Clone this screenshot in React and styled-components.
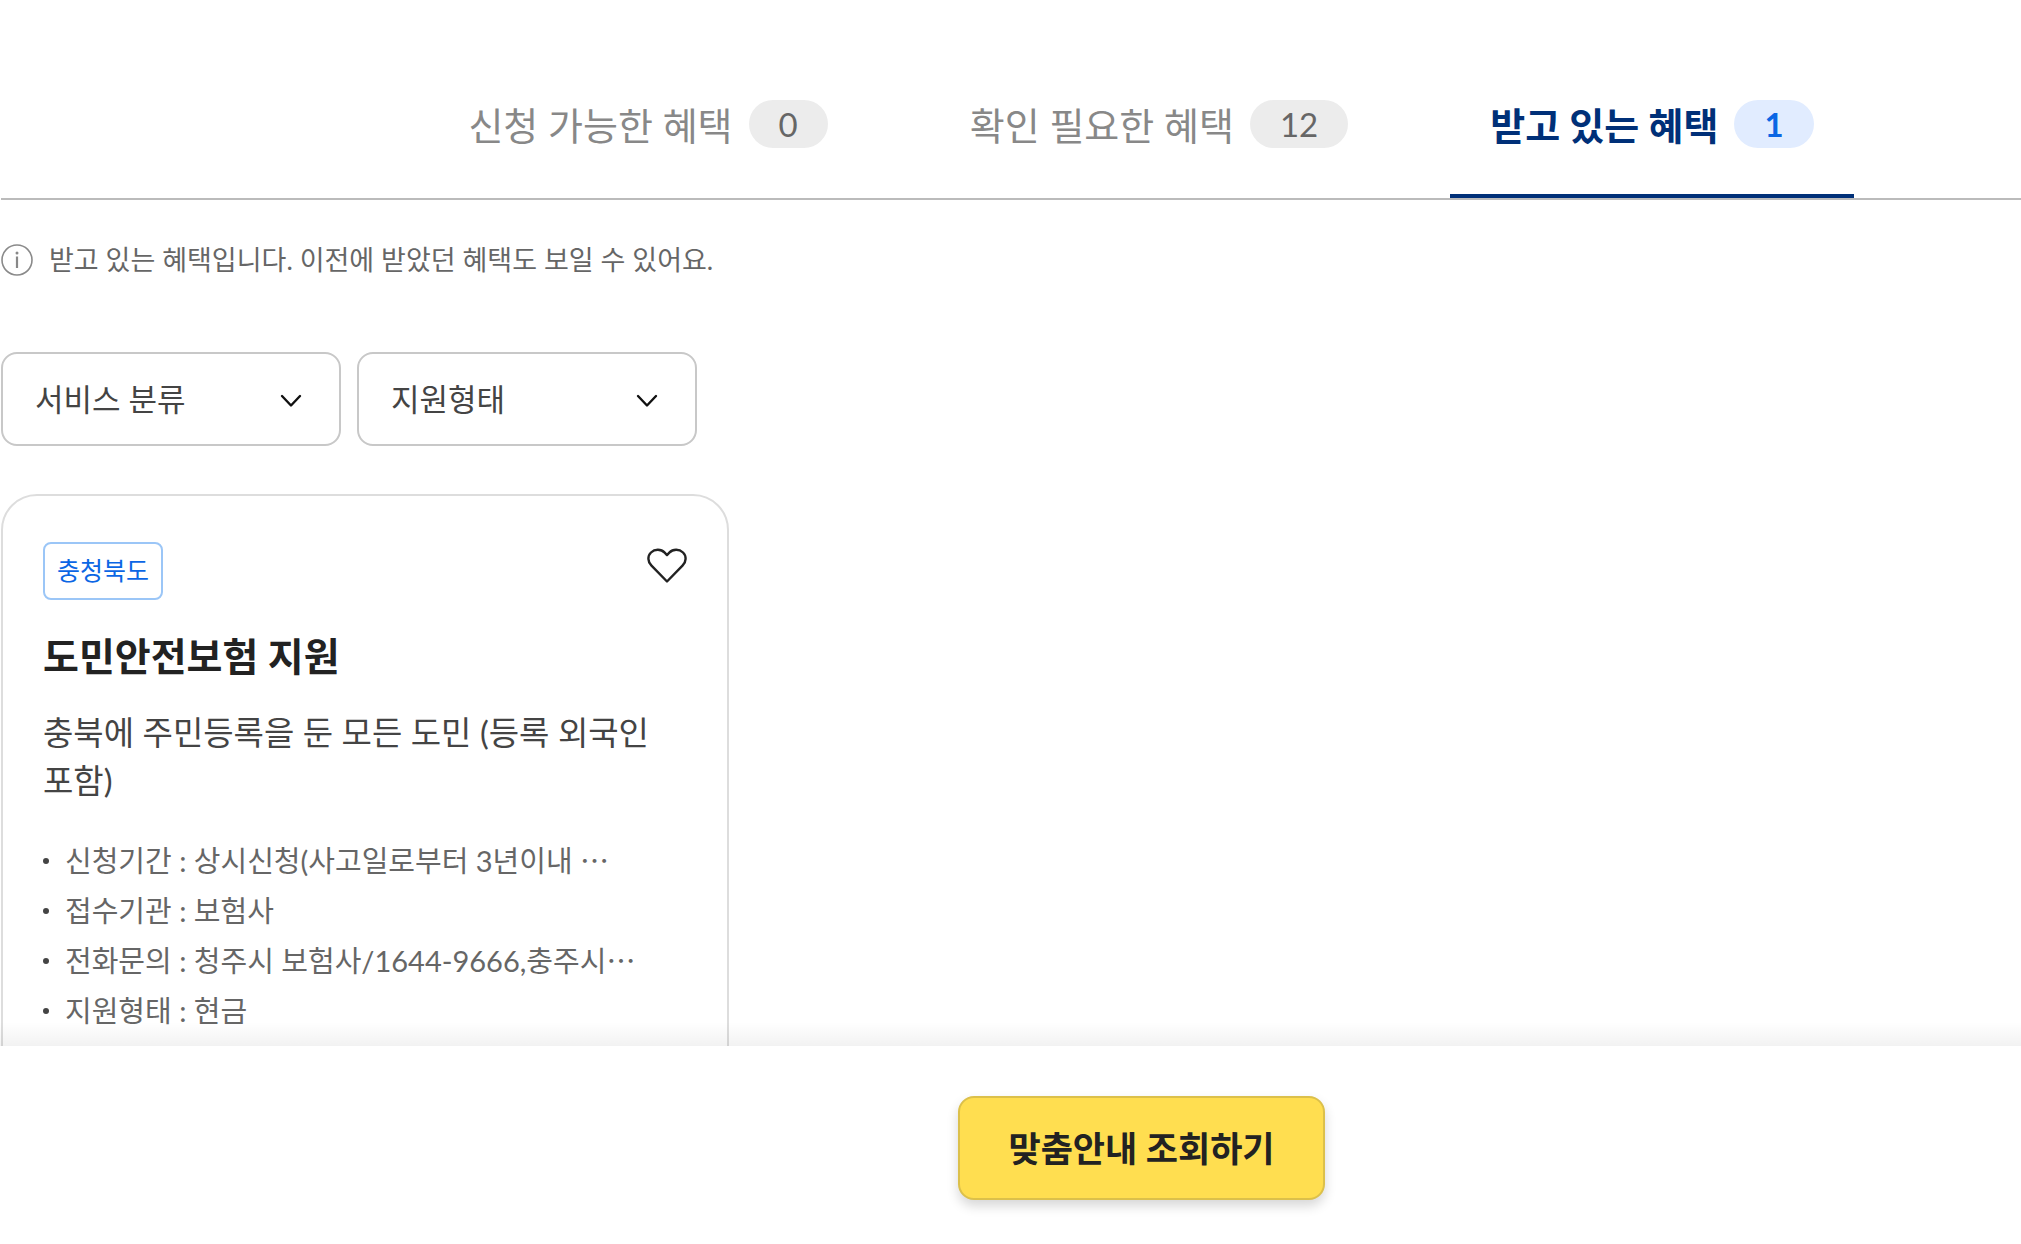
import { useState } from "react";
import styled, { createGlobalStyle } from "styled-components";

const GlobalStyle = createGlobalStyle`
  * {
    box-sizing: border-box;
  }

  body {
    margin: 0;
    background-color: #fff;
  }

  body,
  button,
  select {
    font-family: Lato, "Noto Sans CJK KR", sans-serif;
  }
`;

const tabs = [
  { id: "available", label: "신청 가능한 혜택", count: 0 },
  { id: "check", label: "확인 필요한 혜택", count: 12 },
  { id: "receiving", label: "받고 있는 혜택", count: 1 },
];

const filters = [
  { id: "category", label: "서비스 분류" },
  { id: "type", label: "지원형태" },
];

const benefit = {
  region: "충청북도",
  title: "도민안전보험 지원",
  description: "충북에 주민등록을 둔 모든 도민 (등록 외국인 포함)",
  details: [
    "신청기간 : 상시신청(사고일로부터 3년이내 ⋯",
    "접수기관 : 보험사",
    "전화문의 : 청주시 보험사/1644-9666,충주시⋯",
    "지원형태 : 현금",
  ],
};

/*
 * @param benefit - benefit object {region, title, description, details}
 */
const BenefitCard = ({ benefit }) => {
  const [liked, setLiked] = useState(false);

  return (
    <Card>
      <CardTop>
        <Region>{benefit.region}</Region>
        <LikeButton
          type="button"
          aria-label="관심 혜택"
          aria-pressed={liked}
          onClick={() => setLiked(!liked)}
        >
          <svg width="40" height="36" viewBox="0 0 40 36">
            <path
              d="M20 33.5 4.500 17.700C.5 13.600.4 7.900 4 4.500c3.900-3.700 10-3.600 13.700.2L20 7.100l2.300-2.400C26 .9 32.100.8 36 4.500c3.600 3.400 3.500 9.100-.5 13.200Z"
              fill={liked ? "#222" : "none"}
              stroke="#222"
              strokeWidth="2.4"
              strokeLinejoin="round"
            />
          </svg>
        </LikeButton>
      </CardTop>

      <Title>{benefit.title}</Title>
      <Description>{benefit.description}</Description>

      <Details>
        {benefit.details.map((detail) => (
          <Detail key={detail}>{detail}</Detail>
        ))}
      </Details>
    </Card>
  );
};

const App = () => {
  const [activeTab, setActiveTab] = useState("receiving");

  return (
    <Page lang="ko">
      <GlobalStyle />

      <Content>
        <TabList role="tablist">
          {tabs.map(({ id, label, count }) => (
            <Tab
              key={id}
              type="button"
              role="tab"
              aria-selected={id === activeTab}
              $active={id === activeTab}
              onClick={() => setActiveTab(id)}
            >
              <TabLabel>{label}</TabLabel>
              <Count $active={id === activeTab}>{count}</Count>
            </Tab>
          ))}
        </TabList>

        <Notice>
          <svg width="32" height="32" viewBox="0 0 32 32" aria-hidden="true">
            <circle cx="16" cy="16" r="15" fill="none" stroke="#8a8a8a" strokeWidth="1.6" />
            <circle cx="16" cy="9" r="1.5" fill="#888" />
            <path d="M16 12.5V24" stroke="#888" strokeWidth="2.2" />
          </svg>
          받고 있는 혜택입니다. 이전에 받았던 혜택도 보일 수 있어요.
        </Notice>

        <Filters>
          {filters.map(({ id, label }) => (
            <SelectBox key={id}>
              <Select aria-label={label} defaultValue="">
                <option value="">{label}</option>
              </Select>
              <Chevron width="22" height="14" viewBox="0 0 22 14" aria-hidden="true">
                <path
                  d="M2 2l9 9.500L20 2"
                  fill="none"
                  stroke="#111"
                  strokeWidth="2.4"
                  strokeLinecap="round"
                  strokeLinejoin="round"
                />
              </Chevron>
            </SelectBox>
          ))}
        </Filters>

        <BenefitCard benefit={benefit} />
      </Content>

      <BottomBar>
        <SubmitButton type="button">맞춤안내 조회하기</SubmitButton>
      </BottomBar>
    </Page>
  );
};

const Page = styled.div`
  display: flex;
  flex-direction: column;
  height: 100vh;
  overflow: hidden;
`;

const Content = styled.main`
  flex: 1;
  min-height: 0;
  padding-left: 1px;
  overflow: hidden auto;
  scrollbar-width: none;
`;

const TabList = styled.div`
  display: flex;
  justify-content: center;
  gap: 62px;
  padding: 50px 0 0 260px;
  border-bottom: 2px solid #bbb;
`;

const Tab = styled.button`
  display: flex;
  align-items: center;
  gap: 16px;
  height: 148px;
  padding: 0 40px;
  border: 0;
  background: none;
  box-shadow: ${(props) => (props.$active ? "inset 0 -4px #003078" : "none")};
  color: ${(props) => (props.$active ? "#003078" : "#888")};
  font-size: 38px;
  font-weight: ${(props) => (props.$active ? 700 : 400)};
  white-space: nowrap;
  cursor: pointer;
`;

const TabLabel = styled.span`
  padding-bottom: 2px;
`;

const Count = styled.span`
  padding: 0 30px;
  border-radius: 24px;
  background-color: ${(props) => (props.$active ? "#e1ecff" : "#ececec")};
  color: ${(props) => (props.$active ? "#0b66e4" : "#666")};
  font-size: 33px;
  line-height: 48px;
`;

const Notice = styled.p`
  display: flex;
  align-items: center;
  gap: 16px;
  margin: 40px 0 72px;
  color: #666;
  font-size: 27px;
  line-height: 40px;
`;

const Filters = styled.div`
  display: flex;
  gap: 16px;
  margin-bottom: 48px;
`;

const SelectBox = styled.div`
  position: relative;
  width: 340px;
`;

const Select = styled.select`
  width: 100%;
  height: 94px;
  padding: 0 32px;
  border: 2px solid #c8c8c8;
  border-radius: 16px;
  background-color: #fff;
  color: #444;
  font-size: 31px;
  appearance: none;
`;

const Chevron = styled.svg`
  position: absolute;
  top: 42px;
  right: 39px;
  pointer-events: none;
`;

const Card = styled.article`
  width: 728px;
  max-width: 100%;
  padding: 46px 40px;
  border: 2px solid #ddd;
  border-radius: 36px;
`;

const CardTop = styled.div`
  display: flex;
  align-items: flex-start;
  justify-content: space-between;
`;

const Region = styled.span`
  padding: 0 12px 2px;
  border: 2px solid #9bc6f7;
  border-radius: 8px;
  color: #0b66e4;
  font-size: 25px;
  line-height: 52px;
`;

const LikeButton = styled.button`
  display: flex;
  padding: 6px 0;
  border: 0;
  background: none;
  cursor: pointer;
`;

const Title = styled.h2`
  margin: 28px 0 24px;
  color: #222;
  font-size: 39px;
  line-height: 56px;
`;

const Description = styled.p`
  margin: 0 0 32px;
  color: #444;
  font-size: 33px;
  line-height: 48px;
  word-break: keep-all;
`;

const Details = styled.ul`
  margin: 0;
  padding: 0;
  list-style: none;
`;

const Detail = styled.li`
  display: flex;
  align-items: center;
  gap: 16px;
  color: #666;
  font-size: 29px;
  line-height: 50px;
  white-space: nowrap;

  &::before {
    content: "";
    width: 6px;
    height: 6px;
    border-radius: 50%;
    background-color: #444;
  }
`;

const BottomBar = styled.footer`
  position: relative;
  display: flex;
  justify-content: center;
  padding: 50px 0 44px 262px;
  background-color: #fff;

  /* fade over the scrolled content */
  &::before {
    content: "";
    position: absolute;
    right: 0;
    bottom: 100%;
    left: 0;
    height: 24px;
    background: linear-gradient(rgba(0, 0, 0, 0), rgba(0, 0, 0, 0.05));
    pointer-events: none;
  }
`;

const SubmitButton = styled.button`
  height: 104px;
  padding: 0 48px 4px;
  border: 2px solid #dcc04a;
  border-radius: 16px;
  background-color: #ffde50;
  box-shadow: 0 6px 12px rgba(0, 0, 0, 0.16);
  color: #222;
  font-size: 35px;
  font-weight: 700;
  cursor: pointer;
`;

export default App;
